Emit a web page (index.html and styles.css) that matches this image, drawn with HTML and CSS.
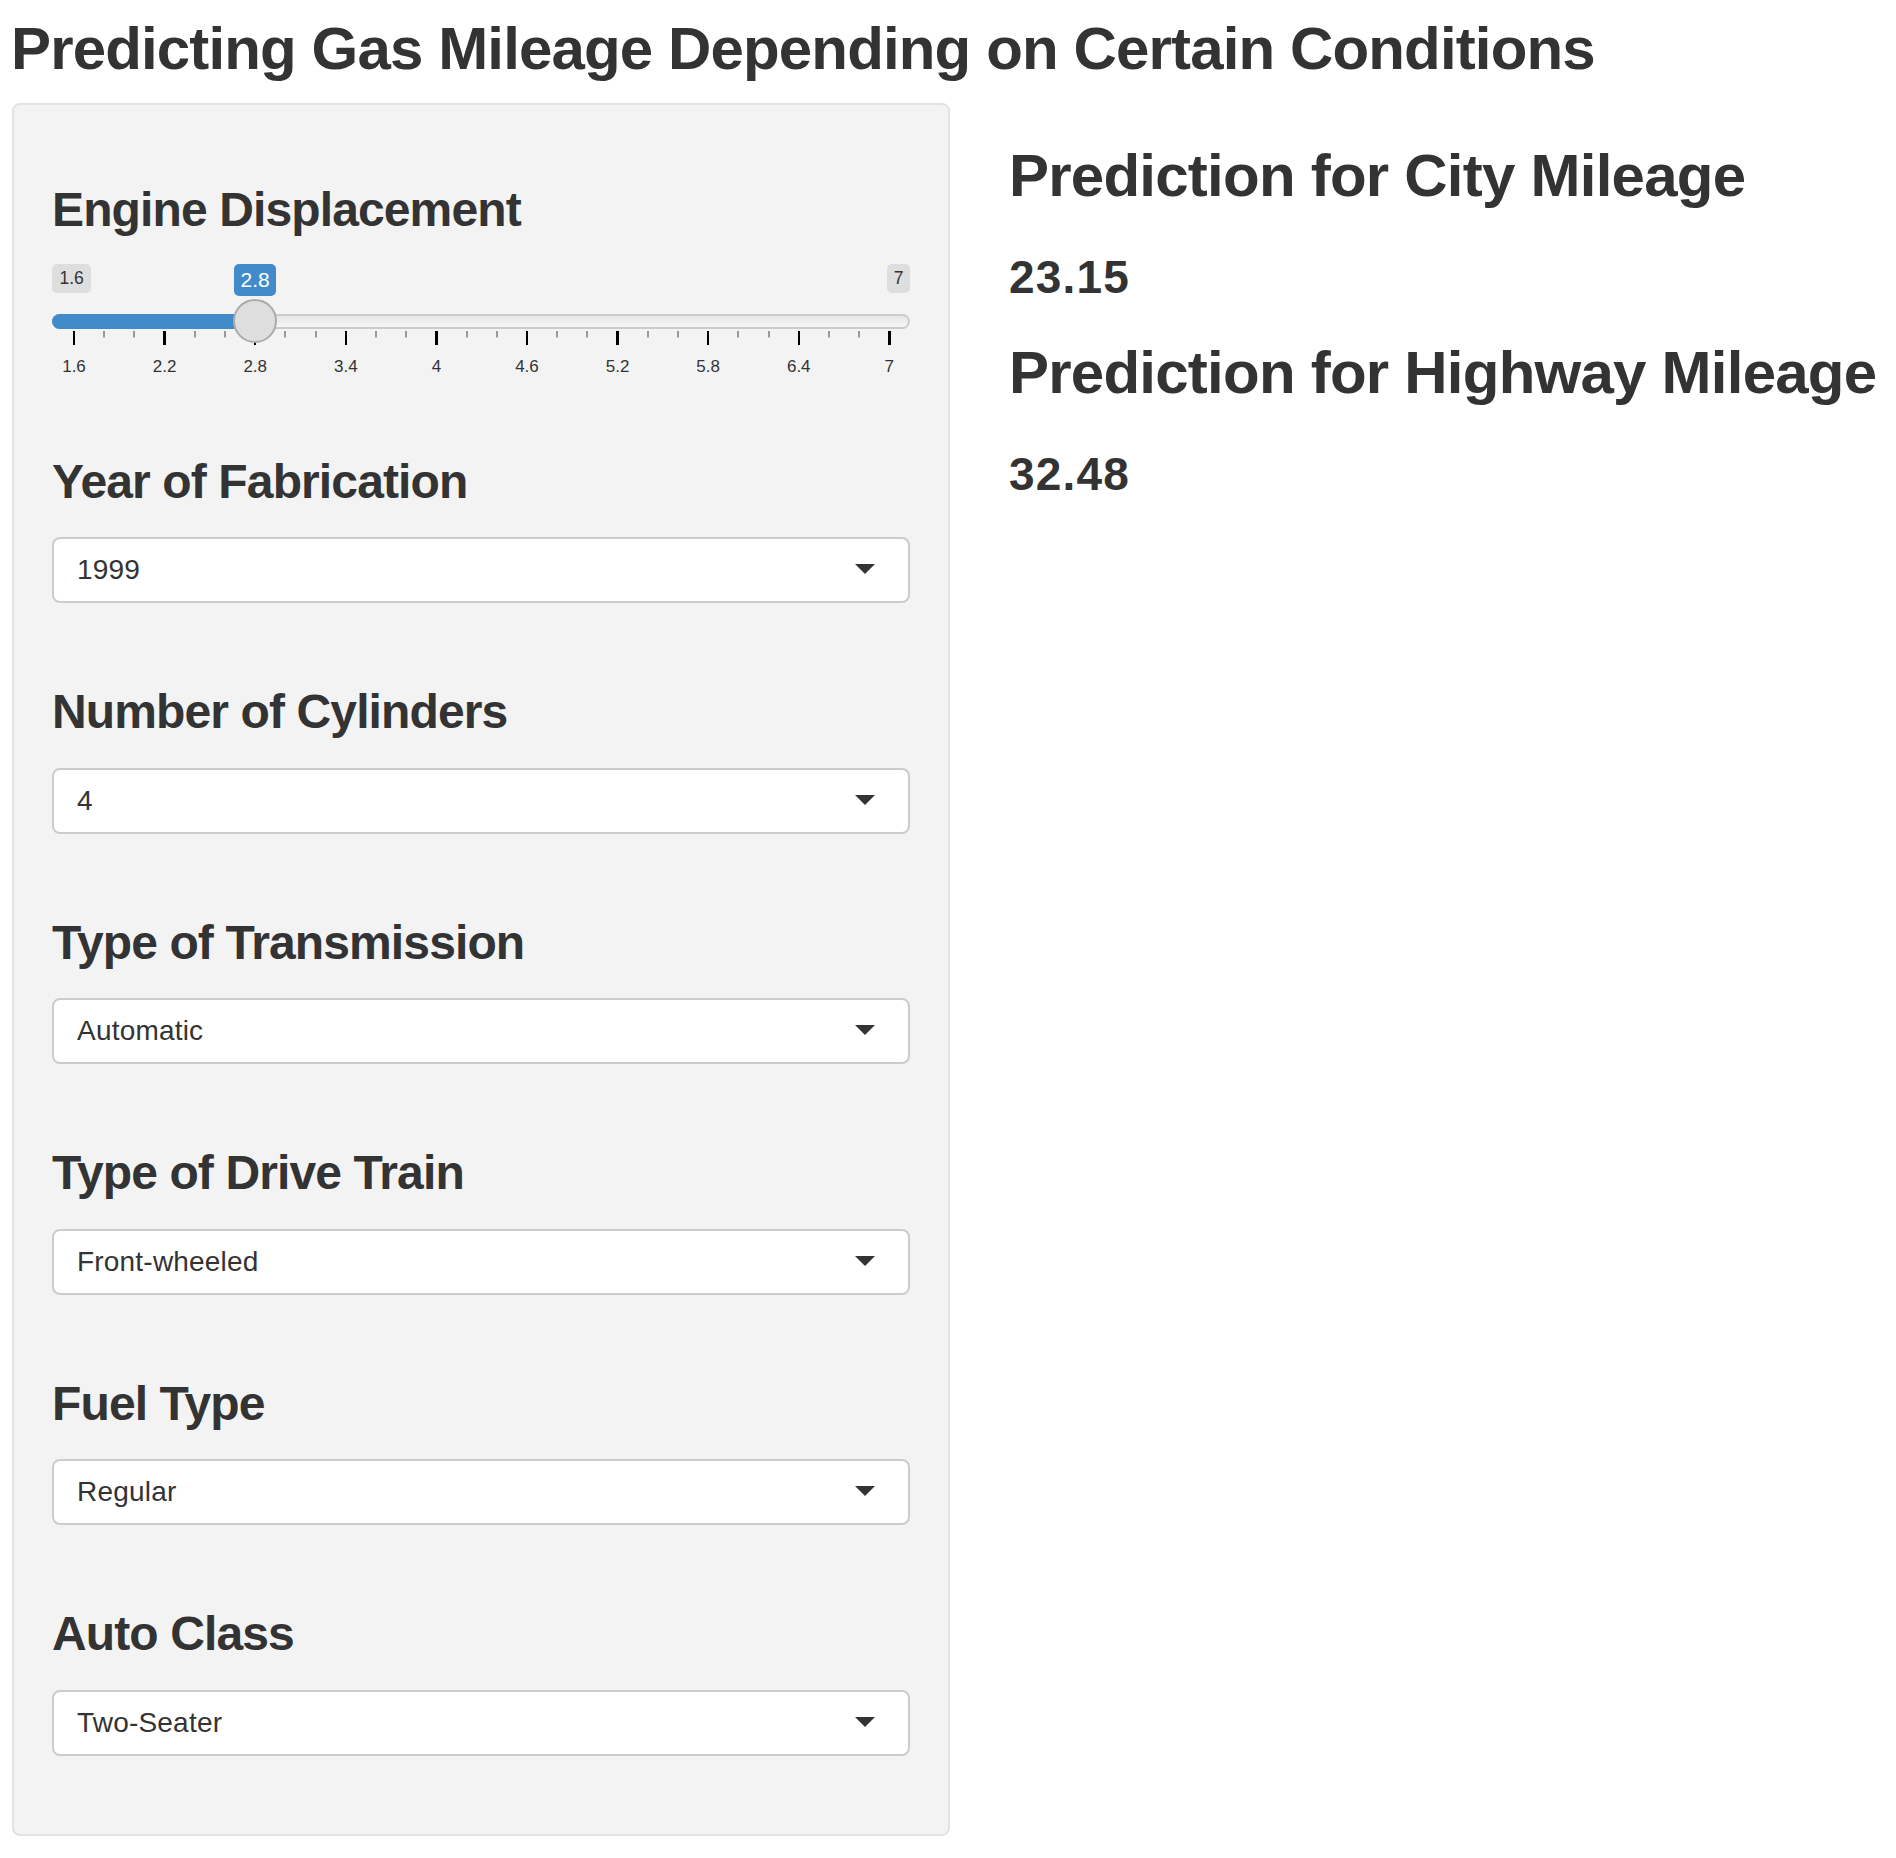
FILE: index.html
```html
<!DOCTYPE html>
<html>
<head>
<meta charset="utf-8">
<title>Predicting Gas Mileage</title>
<link rel="stylesheet" href="styles.css">
</head>
<body>
<div class="page">
  <h2 class="title">Predicting Gas Mileage Depending on Certain Conditions</h2>
  <div class="layout">
    <div class="well">
      <div class="group group-slider">
        <h3 class="label">Engine Displacement</h3>
        <div class="slider">
          <div class="slider-labels">
            <span class="irs-min">1.6</span>
            <span class="irs-single" style="left:182px">2.8</span>
            <span class="irs-max">7</span>
          </div>
          <div class="track">
            <div class="bar" style="width:203px"></div>
            <div class="handle" style="left:181px"></div>
          </div>
          <div class="grid">
            <div class="tick"><span class="tick-mark"></span><span class="tick-text">1.6</span></div>
            <div class="tick"><span class="tick-mark"></span><span class="tick-text">2.2</span></div>
            <div class="tick"><span class="tick-mark"></span><span class="tick-text">2.8</span></div>
            <div class="tick"><span class="tick-mark"></span><span class="tick-text">3.4</span></div>
            <div class="tick"><span class="tick-mark"></span><span class="tick-text">4</span></div>
            <div class="tick"><span class="tick-mark"></span><span class="tick-text">4.6</span></div>
            <div class="tick"><span class="tick-mark"></span><span class="tick-text">5.2</span></div>
            <div class="tick"><span class="tick-mark"></span><span class="tick-text">5.8</span></div>
            <div class="tick"><span class="tick-mark"></span><span class="tick-text">6.4</span></div>
            <div class="tick"><span class="tick-mark"></span><span class="tick-text">7</span></div>
          </div>
        </div>
      </div>
      <div class="group">
        <h3 class="label">Year of Fabrication</h3>
        <div class="select"><span class="select-value">1999</span><span class="caret"></span></div>
      </div>
      <div class="group">
        <h3 class="label">Number of Cylinders</h3>
        <div class="select"><span class="select-value">4</span><span class="caret"></span></div>
      </div>
      <div class="group">
        <h3 class="label">Type of Transmission</h3>
        <div class="select"><span class="select-value">Automatic</span><span class="caret"></span></div>
      </div>
      <div class="group">
        <h3 class="label">Type of Drive Train</h3>
        <div class="select"><span class="select-value">Front-wheeled</span><span class="caret"></span></div>
      </div>
      <div class="group">
        <h3 class="label">Fuel Type</h3>
        <div class="select"><span class="select-value">Regular</span><span class="caret"></span></div>
      </div>
      <div class="group group-last">
        <h3 class="label">Auto Class</h3>
        <div class="select"><span class="select-value">Two-Seater</span><span class="caret"></span></div>
      </div>
    </div>
    <div class="main">
      <h2 class="pred-title">Prediction for City Mileage</h2>
      <div class="pred-value">23.15</div>
      <h2 class="pred-title">Prediction for Highway Mileage</h2>
      <div class="pred-value">32.48</div>
    </div>
  </div>
</div>
</body>
</html>
```
FILE: styles.css
```css
* { box-sizing: border-box; }
html, body { margin: 0; padding: 0; background: #ffffff; }
body {
  font-family: "Liberation Sans", Arial, Helvetica, sans-serif;
  color: #333333;
}
.page { padding-left: 12px; }
.title {
  margin: 16px 0 0 -1px;
  font-size: 60px;
  line-height: 66px;
  font-weight: 700;
  letter-spacing: -0.86px;
  color: #333333;
  white-space: nowrap;
}
.layout {
  display: flex;
  align-items: flex-start;
  margin-top: 21px;
}
.well {
  width: 938px;
  flex: 0 0 938px;
  background: #f3f3f3;
  border: 2px solid #e3e3e3;
  border-radius: 8px;
  padding: 38px 38px 78px 38px;
}
.group { margin-bottom: 82px; }
.group-slider { margin-bottom: 78px; }
.group-last { margin-bottom: 0; }
.label {
  margin: 40px 0 0 0;
  font-size: 48px;
  line-height: 53px;
  font-weight: 700;
  letter-spacing: -0.88px;
  color: #333333;
}
.group:not(.group-slider) .label { margin-top: 0; }

/* slider */
.slider { margin-top: 28px; position: relative; }
.slider-labels {
  display: flex;
  justify-content: space-between;
  align-items: flex-start;
  height: 32px;
  position: relative;
}
.irs-min, .irs-max {
  display: block;
  background: #dedede;
  color: #333333;
  font-size: 17.5px;
  line-height: 28.5px;
  height: 28.5px;
  padding: 0 7.5px;
  border-radius: 5px;
}
.irs-max { padding: 0 6.5px; }
.irs-single {
  position: absolute;
  top: 0;
  background: #428bca;
  color: #ffffff;
  font-size: 21px;
  line-height: 32px;
  height: 32px;
  padding: 0 6.5px;
  border-radius: 5px;
}
.track {
  position: relative;
  margin-top: 18px;
  height: 15px;
  border: 2px solid #cccccc;
  border-radius: 10px;
  background: linear-gradient(to bottom, #dddddd -50%, #ffffff 150%);
}
.bar {
  position: absolute;
  left: -2px;
  top: -2px;
  height: 15px;
  background: #428bca;
  border-radius: 10px 0 0 10px;
}
.handle {
  position: absolute;
  top: -17px;
  margin-left: -2px;
  width: 44px;
  height: 44px;
  border-radius: 50%;
  background: #dedede;
  border: 2px solid #aaaaaa;
}
.grid {
  margin-top: 2px;
  margin-left: 22px;
  width: 815.4px;
  display: flex;
  justify-content: space-between;
  background-image: repeating-linear-gradient(to right, #999999 0, #999999 2px, transparent 2px, transparent 30.2px);
  background-size: 100% 6.5px;
  background-repeat: no-repeat;
  background-position: -1px 0;
}
.tick {
  width: 0;
  display: flex;
  flex-direction: column;
  align-items: center;
}
.tick-mark {
  display: block;
  width: 2.5px;
  height: 14px;
  background: #000000;
  flex: 0 0 auto;
}
.tick-text {
  display: block;
  margin-top: 11.5px;
  font-size: 17px;
  line-height: 20px;
  color: #333333;
  white-space: nowrap;
}

/* select */
.select {
  margin-top: 29.5px;
  height: 66px;
  background: #ffffff;
  border: 2px solid #cccccc;
  border-radius: 8px;
  display: flex;
  align-items: center;
  padding: 0 33px 0 23px;
}
.select-value {
  font-size: 28px;
  letter-spacing: 0.2px;
  color: #333333;
}
.caret {
  margin-left: auto;
  width: 0;
  height: 0;
  border-left: 10px solid transparent;
  border-right: 10px solid transparent;
  border-top: 10px solid #333333;
  margin-top: -2px;
}

/* main */
.main {
  margin-left: 59px;
  padding-top: 39.5px;
}
.pred-title {
  margin: 0 0 43px 0;
  font-size: 60px;
  line-height: 66px;
  font-weight: 700;
  letter-spacing: -0.76px;
  color: #333333;
  white-space: nowrap;
}
.pred-value {
  margin: 0 0 38px 0;
  font-size: 46px;
  line-height: 50px;
  font-weight: 700;
  letter-spacing: 1.2px;
  color: #333333;
}
```
